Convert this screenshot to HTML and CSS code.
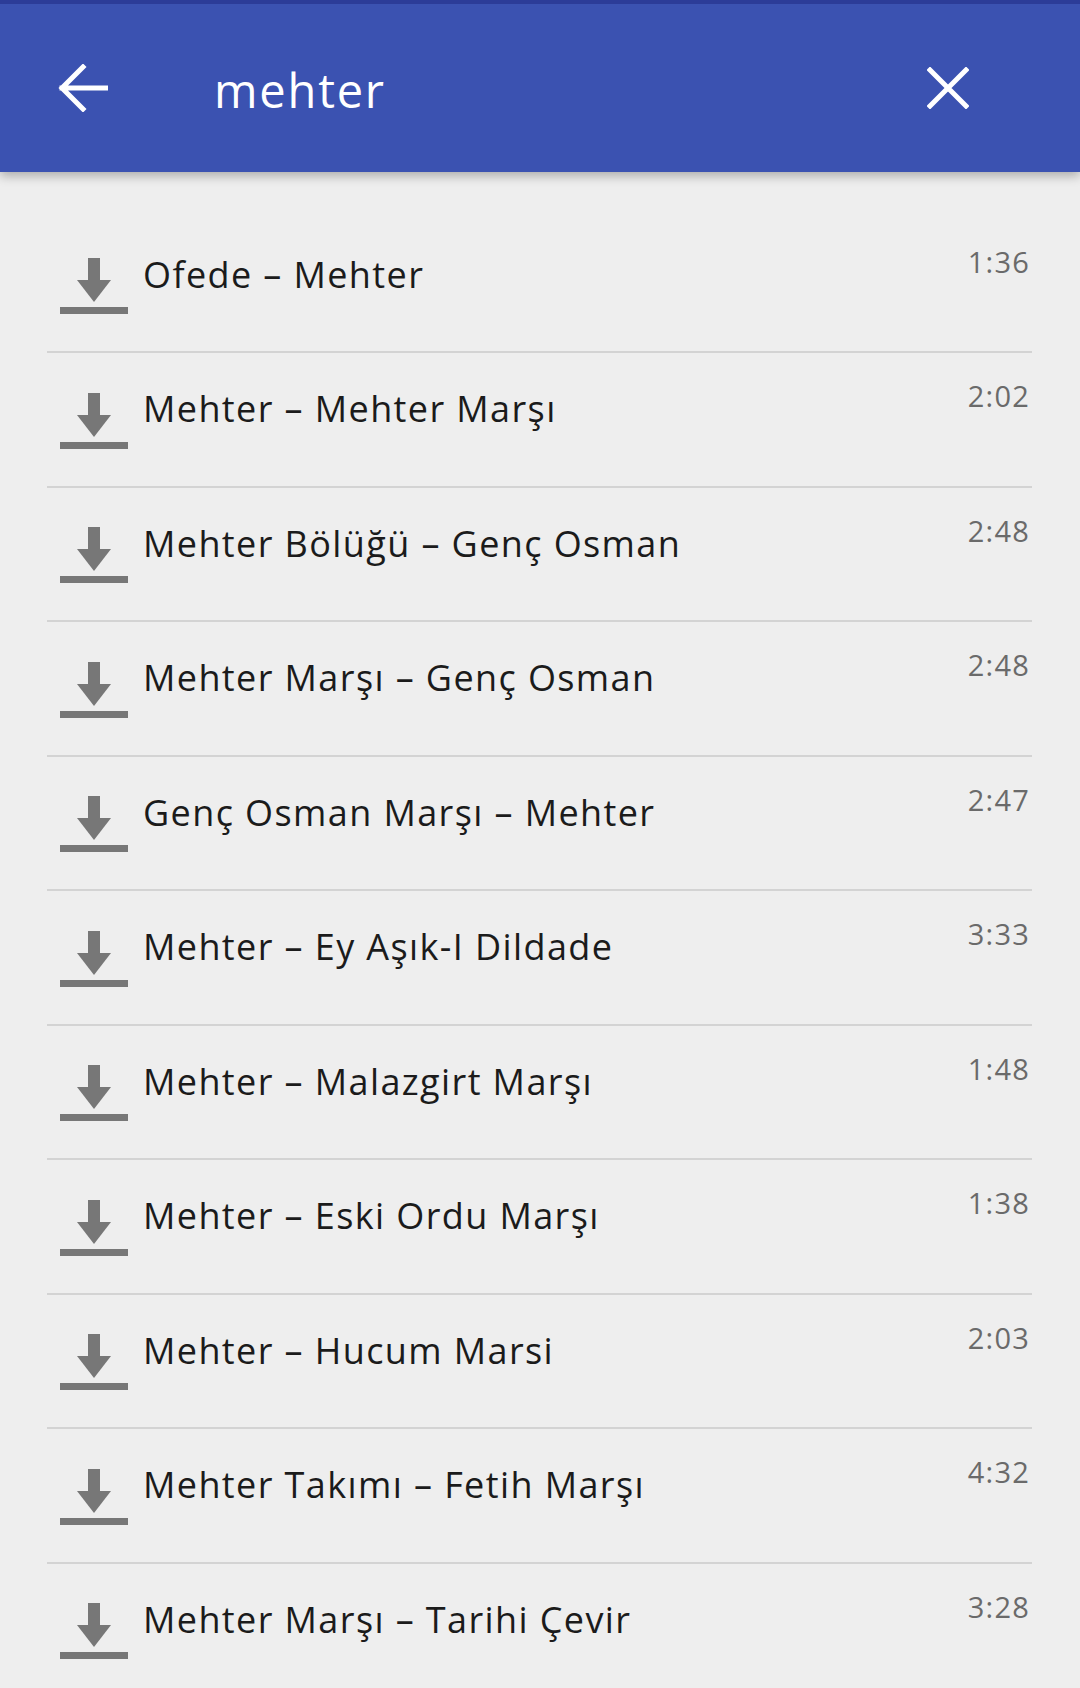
FILE: index.html
```html
<!DOCTYPE html>
<html lang="tr">
<head>
<meta charset="utf-8">
<title>mehter</title>
<link rel="stylesheet" href="styles.css">
</head>
<body>
<header class="appbar">
  <button class="icon-btn back" aria-label="Geri">
    <svg width="50" height="48" viewBox="0 0 50 48"><path d="M4 24H49M25 3L4 24L25 45" fill="none" stroke="#fff" stroke-width="5" stroke-linecap="square"/></svg>
  </button>
  <div class="query">mehter</div>
  <button class="icon-btn close" aria-label="Temizle">
    <svg width="42" height="42" viewBox="0 0 42 42"><path d="M3 3L39 39M39 3L3 39" fill="none" stroke="#fff" stroke-width="5" stroke-linecap="square"/></svg>
  </button>
</header>
<main class="list">
  <div class="row"><svg class="dl" width="68" height="56" viewBox="0 0 68 56"><rect x="28" y="0" width="12" height="23"/><polygon points="17,22 51,22 34,44"/><rect x="0" y="49" width="68" height="7"/></svg><div class="title">Ofede – Mehter</div><div class="time">1:36</div></div>
  <div class="row"><svg class="dl" width="68" height="56" viewBox="0 0 68 56"><rect x="28" y="0" width="12" height="23"/><polygon points="17,22 51,22 34,44"/><rect x="0" y="49" width="68" height="7"/></svg><div class="title">Mehter – Mehter Marşı</div><div class="time">2:02</div></div>
  <div class="row"><svg class="dl" width="68" height="56" viewBox="0 0 68 56"><rect x="28" y="0" width="12" height="23"/><polygon points="17,22 51,22 34,44"/><rect x="0" y="49" width="68" height="7"/></svg><div class="title">Mehter Bölüğü – Genç Osman</div><div class="time">2:48</div></div>
  <div class="row"><svg class="dl" width="68" height="56" viewBox="0 0 68 56"><rect x="28" y="0" width="12" height="23"/><polygon points="17,22 51,22 34,44"/><rect x="0" y="49" width="68" height="7"/></svg><div class="title">Mehter Marşı – Genç Osman</div><div class="time">2:48</div></div>
  <div class="row"><svg class="dl" width="68" height="56" viewBox="0 0 68 56"><rect x="28" y="0" width="12" height="23"/><polygon points="17,22 51,22 34,44"/><rect x="0" y="49" width="68" height="7"/></svg><div class="title">Genç Osman Marşı – Mehter</div><div class="time">2:47</div></div>
  <div class="row"><svg class="dl" width="68" height="56" viewBox="0 0 68 56"><rect x="28" y="0" width="12" height="23"/><polygon points="17,22 51,22 34,44"/><rect x="0" y="49" width="68" height="7"/></svg><div class="title">Mehter – Ey Aşık-I Dildade</div><div class="time">3:33</div></div>
  <div class="row"><svg class="dl" width="68" height="56" viewBox="0 0 68 56"><rect x="28" y="0" width="12" height="23"/><polygon points="17,22 51,22 34,44"/><rect x="0" y="49" width="68" height="7"/></svg><div class="title">Mehter – Malazgirt Marşı</div><div class="time">1:48</div></div>
  <div class="row"><svg class="dl" width="68" height="56" viewBox="0 0 68 56"><rect x="28" y="0" width="12" height="23"/><polygon points="17,22 51,22 34,44"/><rect x="0" y="49" width="68" height="7"/></svg><div class="title">Mehter – Eski Ordu Marşı</div><div class="time">1:38</div></div>
  <div class="row"><svg class="dl" width="68" height="56" viewBox="0 0 68 56"><rect x="28" y="0" width="12" height="23"/><polygon points="17,22 51,22 34,44"/><rect x="0" y="49" width="68" height="7"/></svg><div class="title">Mehter – Hucum Marsi</div><div class="time">2:03</div></div>
  <div class="row"><svg class="dl" width="68" height="56" viewBox="0 0 68 56"><rect x="28" y="0" width="12" height="23"/><polygon points="17,22 51,22 34,44"/><rect x="0" y="49" width="68" height="7"/></svg><div class="title">Mehter Takımı – Fetih Marşı</div><div class="time">4:32</div></div>
  <div class="row"><svg class="dl" width="68" height="56" viewBox="0 0 68 56"><rect x="28" y="0" width="12" height="23"/><polygon points="17,22 51,22 34,44"/><rect x="0" y="49" width="68" height="7"/></svg><div class="title">Mehter Marşı – Tarihi Çevir</div><div class="time">3:28</div></div>
</main>
</body>
</html>
```
FILE: styles.css
```css
html, body {
  margin: 0;
  padding: 0;
}
body {
  width: 1080px;
  height: 1688px;
  overflow: hidden;
  background: #eeeeee;
  font-family: "Open Sans", "Noto Sans", sans-serif;
}
.appbar {
  position: relative;
  z-index: 2;
  box-sizing: border-box;
  height: 172px;
  background: #3b52b1;
  border-top: 4px solid #2c3c98;
  display: flex;
  align-items: center;
  box-shadow: 0 4px 10px rgba(0, 0, 0, 0.28);
}
.icon-btn {
  background: none;
  border: 0;
  padding: 0;
  margin: 0;
  display: flex;
  align-items: center;
  justify-content: center;
}
.back {
  margin-left: 58px;
  width: 50px;
  height: 48px;
}
.query {
  margin-left: 106px;
  flex: 1;
  color: #ffffff;
  font-size: 47px;
  letter-spacing: 1.8px;
  line-height: 60px;
  padding-top: 4px;
}
.close {
  width: 42px;
  height: 42px;
  margin-right: 111px;
  margin-top: 0;
}
.list {
  padding: 46.5px 48px 0 47px;
}
.row {
  box-sizing: border-box;
  height: 134.5px;
  border-bottom: 2px solid #d3d3d3;
  display: flex;
  align-items: flex-start;
}
.dl {
  flex: none;
  margin: 39.5px 0 0 13px;
  fill: #777777;
}
.title {
  flex: 1;
  margin-left: 15px;
  padding-top: 34px;
  font-size: 36px;
  letter-spacing: 1.4px;
  line-height: 44px;
  color: #1b1b1b;
}
.time {
  flex: none;
  padding-top: 25px;
  margin-right: 2px;
  font-size: 29px;
  letter-spacing: 1.2px;
  line-height: 36px;
  color: #6a6a6a;
}
```
